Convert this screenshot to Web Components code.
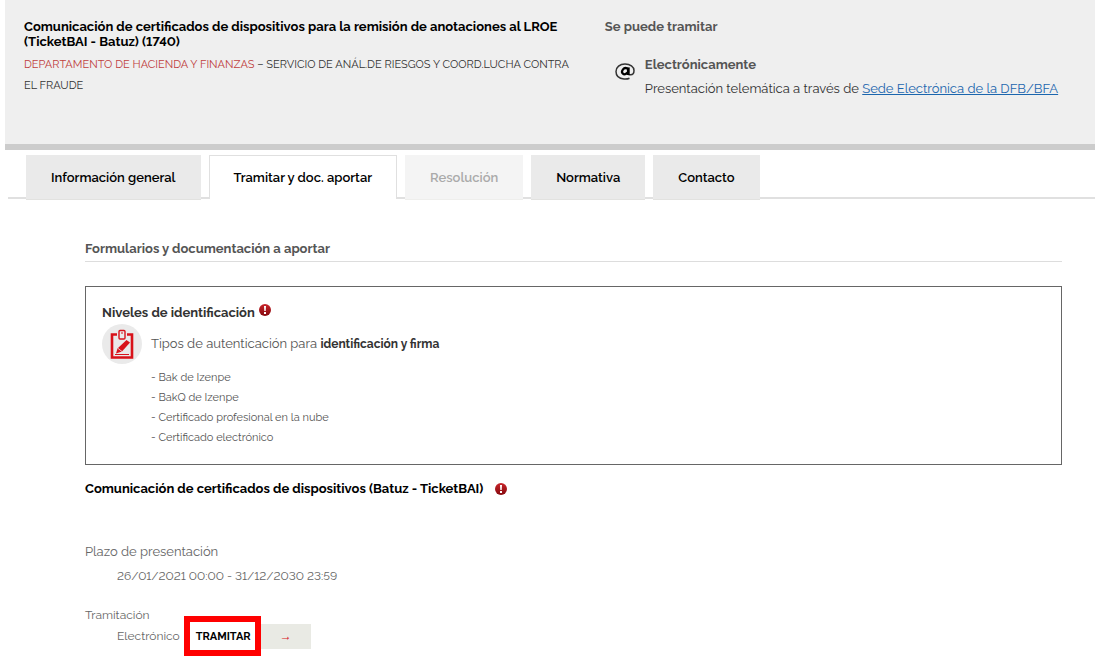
<!DOCTYPE html>
<html lang="es">
<head>
<meta charset="utf-8">
<meta name="viewport" content="width=device-width, initial-scale=1">
<title>Comunicación de certificados de dispositivos</title>
<style>
  body {
    margin: 0;
    background: #fff;
    color: #333;
    font-family: Raleway, Lato, "Liberation Sans", sans-serif;
    font-size: 13px;
    font-variant-numeric: lining-nums;
    line-height: 20px;
  }
</style>
</head>
<body>
<procedure-page></procedure-page>

<script>
class AlertIcon extends HTMLElement {
  constructor() {
    super();
    this.attachShadow({ mode: "open" });
  }

  connectedCallback() {
    this.shadowRoot.innerHTML = /* html */`
    <style>
      :host {
        display: inline-block;
        width: 12px;
        height: 12px;
      }

      svg {
        display: block;
      }
    </style>
    <svg width="12" height="12" viewBox="0 0 12 12" role="img" aria-label="Aviso">
      <defs>
        <linearGradient id="red" x1="0" y1="0" x2="0" y2="1">
          <stop offset="0" stop-color="#c9252b"/>
          <stop offset="1" stop-color="#85090e"/>
        </linearGradient>
      </defs>
      <circle cx="6" cy="6" r="6" fill="url(#red)"/>
      <path d="M5 2h2l-.3 5H5.300z" fill="#fff"/>
      <rect x="5" y="8" width="2" height="2" fill="#fff"/>
    </svg>`;
  }
}

class ProcedureHeader extends HTMLElement {
  constructor() {
    super();
    this.attachShadow({ mode: "open" });
  }

  static get styles() {
    return /* css */`
      :host {
        display: block;
        margin-left: 5px;
        padding: 19px 19px 45px;
        background: #efefef;
        border-bottom: 6px solid #ccc;
      }

      .columns {
        display: grid;
        grid-template-columns: 13fr 11fr;
        gap: 24px;
      }

      h1,
      h2,
      h3,
      p {
        margin: 0;
      }

      h1 {
        color: #000;
        font-size: 13px;
        line-height: 15px;
      }

      .department {
        margin-top: 5px;
        font-size: 11px;
        line-height: 21px;
      }

      .department a {
        color: #c0403d;
        text-decoration: none;
      }

      h2,
      h3 {
        color: #555;
        font-size: 13px;
        line-height: 15px;
      }

      .channel {
        display: flex;
        gap: 10px;
        margin-top: 23px;
        padding-left: 10px;
      }

      .channel svg {
        margin-top: 6px;
      }

      .channel p {
        margin-top: 7px;
        line-height: 20px;
      }

      .channel a {
        color: #1b66ae;
      }
    `;
  }

  connectedCallback() {
    this.shadowRoot.innerHTML = /* html */`
    <style>${ProcedureHeader.styles}</style>
    <div class="columns">
      <div>
        <h1>Comunicación de certificados de dispositivos para la remisión de anotaciones al LROE (TicketBAI - Batuz) (1740)</h1>
        <p class="department"><a href="#departamento">DEPARTAMENTO DE HACIENDA Y FINANZAS</a> – SERVICIO DE ANÁL.DE RIESGOS Y COORD.LUCHA CONTRA EL FRAUDE</p>
      </div>
      <div>
        <h2>Se puede tramitar</h2>
        <div class="channel">
          <svg width="20" height="17" viewBox="0 0 20 17" fill="none" stroke="#333">
            <path d="M14.500 15.200C12.800 16 10.800 16.200 9 16C4 15.600 1 12.600 1 8.500C1 4 4.800 1 10 1C15.200 1 19 3.700 19 7.500C19 10.500 17.400 11.800 15.600 11.800H13.500" stroke-width="1.500"/>
            <path d="M12.500 5.600C10.800 4.700 9 5 8 6.300C6.800 7.800 6.800 9.700 7.900 10.700C9 11.600 10.800 11.300 12.500 9.600" stroke="#000" stroke-width="2.200"/>
            <path d="M13.300 4.400V12" stroke="#000" stroke-width="2.800"/>
          </svg>
          <div>
            <h3>Electrónicamente</h3>
            <p>Presentación telemática a través de <a href="#sede">Sede Electrónica de la DFB/BFA</a></p>
          </div>
        </div>
      </div>
    </div>`;
  }
}

class ProcedureTabs extends HTMLElement {
  constructor() {
    super();
    this.attachShadow({ mode: "open" });
  }

  static get styles() {
    return /* css */`
      :host {
        display: block;
        margin: 5px 0 0 8px;
      }

      /* the rule runs behind the tabs, just above their lower edge */
      nav {
        display: flex;
        gap: 8px;
        height: 45px;
        padding-left: 18px;
        background: linear-gradient(#e0e0e0, #e0e0e0) 0 42px / 100% 2px no-repeat;
      }

      button {
        box-sizing: border-box;
        height: 45px;
        padding: 1px 25px 0;
        border: 0;
        border-bottom: 1px solid #e2e2e0;
        background: #eaeaea;
        color: #000;
        font: inherit;
        font-weight: 600;
        cursor: pointer;
      }

      button[aria-selected="true"] {
        height: 44px;
        padding: 0 24px;
        border: 1px solid #e0e0e0;
        border-bottom: 0;
        background: #fff;
      }

      button:disabled {
        border-color: #eeeeec;
        background: #f4f4f4;
        color: #aaa;
        cursor: default;
      }
    `;
  }

  connectedCallback() {
    this.shadowRoot.innerHTML = /* html */`
    <style>${ProcedureTabs.styles}</style>
    <nav role="tablist">
      <button role="tab">Información general</button>
      <button role="tab" aria-selected="true">Tramitar y doc. aportar</button>
      <button role="tab" disabled>Resolución</button>
      <button role="tab">Normativa</button>
      <button role="tab">Contacto</button>
    </nav>`;
  }
}

class IdentificationBox extends HTMLElement {
  constructor() {
    super();
    this.attachShadow({ mode: "open" });
  }

  static get styles() {
    return /* css */`
      :host {
        display: block;
        padding: 16px;
        border: 1px solid #666;
      }

      h3 {
        display: flex;
        align-items: flex-start;
        gap: 4px;
        margin: 0;
        font-size: 13px;
        line-height: 20px;
      }

      alert-icon {
        margin-top: 1px;
      }

      .auth {
        display: grid;
        grid-template-columns: 40px 1fr;
        column-gap: 9px;
        align-items: center;
        margin-top: 1px;
        color: #555;
      }

      .auth svg {
        display: block;
      }

      p {
        margin: 0;
      }

      strong {
        color: #333;
        font-size: 12px;
      }

      ul {
        grid-column: 2;
        margin: 4px 0 0;
        padding: 0;
        list-style: none;
        font-size: 11px;
      }
    `;
  }

  connectedCallback() {
    this.shadowRoot.innerHTML = /* html */`
    <style>${IdentificationBox.styles}</style>
    <h3>Niveles de identificación <alert-icon></alert-icon></h3>
    <div class="auth">
      <svg width="40" height="40" viewBox="0 0 40 40" fill="none">
        <circle cx="20" cy="20" r="20" fill="#eaeaea"/>
        <path d="M15 10.500H10V33.500H30V10.500H25" stroke="#d8121a" stroke-width="2.600"/>
        <rect x="17" y="6.500" width="6" height="8.500" rx="1" stroke="#d8121a" stroke-width="1.400"/>
        <path d="M19 9h2" stroke="#d8121a" stroke-width="1.200"/>
        <path d="M24.500 16l3.500 2.500-8 9-6 2 1.500-5z" fill="#d8121a"/>
        <path d="M15.500 24l4.500 3.500" stroke="#eaeaea" stroke-width=".8"/>
        <path d="M13 30.500h14" stroke="#d8121a"/>
      </svg>
      <p>Tipos de autenticación para <strong>identificación y firma</strong></p>
      <ul>
        <li>- Bak de Izenpe</li>
        <li>- BakQ de Izenpe</li>
        <li>- Certificado profesional en la nube</li>
        <li>- Certificado electrónico</li>
      </ul>
    </div>`;
  }
}

class ProcedureForm extends HTMLElement {
  constructor() {
    super();
    this.attachShadow({ mode: "open" });
  }

  static get styles() {
    return /* css */`
      :host {
        display: block;
        color: #666;
      }

      h3 {
        display: flex;
        align-items: center;
        gap: 12px;
        margin: 0;
        color: #000;
        font-size: 13px;
      }

      dl {
        margin: 42px 0 0;
      }

      dt {
        line-height: 22px;
      }

      dd {
        display: flex;
        align-items: center;
        margin: 0 0 18px;
        padding-left: 32px;
        font-size: 12px;
        line-height: 26px;
      }

      .small {
        font-size: 12px;
        line-height: 16px;
      }

      .procedure {
        margin: -7px 0 0;
      }

      button {
        display: flex;
        align-items: center;
        margin-left: 4px;
        padding: 0;
        border: 0;
        background: none;
        color: #000;
        font: inherit;
        font-size: 11px;
        font-weight: 700;
        cursor: pointer;
      }

      .label {
        padding: 1px 4px 0 6px;
        border: 6px solid #f00;
        line-height: 27px;
      }

      .arrow {
        width: 50px;
        background: #e9eae4;
        color: #d8121a;
        font-family: "Liberation Sans", sans-serif;
        font-size: 12px;
        line-height: 25px;
      }
    `;
  }

  connectedCallback() {
    this.shadowRoot.innerHTML = /* html */`
    <style>${ProcedureForm.styles}</style>
    <h3>Comunicación de certificados de dispositivos (Batuz - TicketBAI) <alert-icon></alert-icon></h3>
    <dl>
      <dt>Plazo de presentación</dt>
      <dd>26/01/2021 00:00 - 31/12/2030 23:59</dd>
      <dt class="small">Tramitación</dt>
      <dd class="procedure">Electrónico
        <button><span class="label">TRAMITAR</span><span class="arrow">→</span></button>
      </dd>
    </dl>`;
  }
}

class ProcedurePage extends HTMLElement {
  constructor() {
    super();
    this.attachShadow({ mode: "open" });
  }

  static get styles() {
    return /* css */`
      :host {
        display: block;
      }

      main {
        margin: 39px 33px 0 85px;
      }

      h2 {
        margin: 0 0 24px;
        padding-bottom: 2px;
        border-bottom: 1px solid #ddd;
        color: #555;
        font-size: 13px;
        line-height: 20px;
      }

      procedure-form {
        margin-top: 14px;
      }
    `;
  }

  connectedCallback() {
    this.shadowRoot.innerHTML = /* html */`
    <style>${ProcedurePage.styles}</style>
    <procedure-header></procedure-header>
    <procedure-tabs></procedure-tabs>
    <main>
      <h2>Formularios y documentación a aportar</h2>
      <identification-box></identification-box>
      <procedure-form></procedure-form>
    </main>`;
  }
}

customElements.define("alert-icon", AlertIcon);
customElements.define("procedure-header", ProcedureHeader);
customElements.define("procedure-tabs", ProcedureTabs);
customElements.define("identification-box", IdentificationBox);
customElements.define("procedure-form", ProcedureForm);
customElements.define("procedure-page", ProcedurePage);
</script>
</body>
</html>
